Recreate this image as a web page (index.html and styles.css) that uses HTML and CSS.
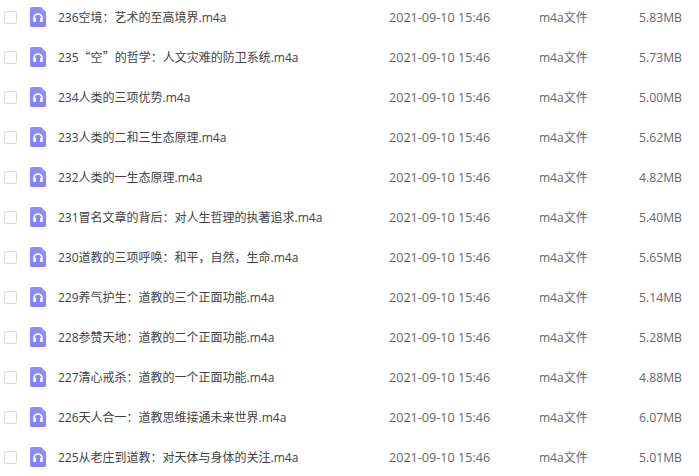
FILE: index.html
```html
<!DOCTYPE html>
<html lang="zh">

<head>
	<meta charset="UTF-8">
	<title>文件列表</title>
	<link rel="stylesheet" href="styles.css">
</head>

<body>
	<svg class="defs" width="0" height="0">
		<defs>
			<linearGradient id="fileFill" x1="0" y1="0" x2="0" y2="1">
				<stop offset="0" stop-color="#8f8ffb"/>
				<stop offset="1" stop-color="#7f81fb"/>
			</linearGradient>
			<symbol id="audioIcon" viewBox="0 0 16 20">
				<path d="M2 0H11L16 5V18a2 2 0 0 1-2 2H2a2 2 0 0 1-2-2V2a2 2 0 0 1 2-2Z" fill="url(#fileFill)"/>
				<path d="M4 12.5V11a4 4 0 0 1 8 0V12.5" fill="none" stroke="#fff" stroke-width="1.6"/>
				<rect x="3.2" y="10.8" width="2.8" height="4.2" rx="1" fill="#fff"/>
				<rect x="10" y="10.8" width="2.8" height="4.2" rx="1" fill="#fff"/>
			</symbol>
		</defs>
	</svg>
	<div class="file-list">
		<div class="file-row">
			<span class="check"></span>
			<svg class="file-icon"><use href="#audioIcon"/></svg>
			<span class="file-name">236空境：艺术的至高境界.m4a</span>
			<span class="file-date">2021-09-10 15:46</span>
			<span class="file-type">m4a文件</span>
			<span class="file-size">5.83MB</span>
		</div>
		<div class="file-row">
			<span class="check"></span>
			<svg class="file-icon"><use href="#audioIcon"/></svg>
			<span class="file-name">235<span class="quote">“</span>空<span class="quote">”</span>的哲学：人文灾难的防卫系统.m4a</span>
			<span class="file-date">2021-09-10 15:46</span>
			<span class="file-type">m4a文件</span>
			<span class="file-size">5.73MB</span>
		</div>
		<div class="file-row">
			<span class="check"></span>
			<svg class="file-icon"><use href="#audioIcon"/></svg>
			<span class="file-name">234人类的三项优势.m4a</span>
			<span class="file-date">2021-09-10 15:46</span>
			<span class="file-type">m4a文件</span>
			<span class="file-size">5.00MB</span>
		</div>
		<div class="file-row">
			<span class="check"></span>
			<svg class="file-icon"><use href="#audioIcon"/></svg>
			<span class="file-name">233人类的二和三生态原理.m4a</span>
			<span class="file-date">2021-09-10 15:46</span>
			<span class="file-type">m4a文件</span>
			<span class="file-size">5.62MB</span>
		</div>
		<div class="file-row">
			<span class="check"></span>
			<svg class="file-icon"><use href="#audioIcon"/></svg>
			<span class="file-name">232人类的一生态原理.m4a</span>
			<span class="file-date">2021-09-10 15:46</span>
			<span class="file-type">m4a文件</span>
			<span class="file-size">4.82MB</span>
		</div>
		<div class="file-row">
			<span class="check"></span>
			<svg class="file-icon"><use href="#audioIcon"/></svg>
			<span class="file-name">231冒名文章的背后：对人生哲理的执著追求.m4a</span>
			<span class="file-date">2021-09-10 15:46</span>
			<span class="file-type">m4a文件</span>
			<span class="file-size">5.40MB</span>
		</div>
		<div class="file-row">
			<span class="check"></span>
			<svg class="file-icon"><use href="#audioIcon"/></svg>
			<span class="file-name">230道教的三项呼唤：和平，自然，生命.m4a</span>
			<span class="file-date">2021-09-10 15:46</span>
			<span class="file-type">m4a文件</span>
			<span class="file-size">5.65MB</span>
		</div>
		<div class="file-row">
			<span class="check"></span>
			<svg class="file-icon"><use href="#audioIcon"/></svg>
			<span class="file-name">229养气护生：道教的三个正面功能.m4a</span>
			<span class="file-date">2021-09-10 15:46</span>
			<span class="file-type">m4a文件</span>
			<span class="file-size">5.14MB</span>
		</div>
		<div class="file-row">
			<span class="check"></span>
			<svg class="file-icon"><use href="#audioIcon"/></svg>
			<span class="file-name">228参赞天地：道教的二个正面功能.m4a</span>
			<span class="file-date">2021-09-10 15:46</span>
			<span class="file-type">m4a文件</span>
			<span class="file-size">5.28MB</span>
		</div>
		<div class="file-row">
			<span class="check"></span>
			<svg class="file-icon"><use href="#audioIcon"/></svg>
			<span class="file-name">227清心戒杀：道教的一个正面功能.m4a</span>
			<span class="file-date">2021-09-10 15:46</span>
			<span class="file-type">m4a文件</span>
			<span class="file-size">4.88MB</span>
		</div>
		<div class="file-row">
			<span class="check"></span>
			<svg class="file-icon"><use href="#audioIcon"/></svg>
			<span class="file-name">226天人合一：道教思维接通未来世界.m4a</span>
			<span class="file-date">2021-09-10 15:46</span>
			<span class="file-type">m4a文件</span>
			<span class="file-size">6.07MB</span>
		</div>
		<div class="file-row">
			<span class="check"></span>
			<svg class="file-icon"><use href="#audioIcon"/></svg>
			<span class="file-name">225从老庄到道教：对天体与身体的关注.m4a</span>
			<span class="file-date">2021-09-10 15:46</span>
			<span class="file-type">m4a文件</span>
			<span class="file-size">5.01MB</span>
		</div>
	</div>
</body>

</html>
```

FILE: styles.css
```css
html, body {
	height: 100%;
	overflow: hidden;
}

body {
	margin: 0;
	background-color: #fff;
	font-family: "Open Sans", "Noto Sans CJK SC", sans-serif;
	font-size: 12px;
	color: #424242;
}

.defs {
	display: block;
	height: 0;
}

.file-list {
	margin-top: -3px;
}

.file-row {
	display: flex;
	align-items: center;
	height: 40px;
	white-space: nowrap;
}

.check {
	box-sizing: border-box;
	flex: none;
	width: 13px;
	height: 13px;
	margin-left: 4px;
	border: 1px solid #d5d5d5;
	border-radius: 3px;
	background-color: #fff;
}

.file-icon {
	flex: none;
	width: 16px;
	height: 20px;
	margin-left: 13px;
}

.file-name {
	flex: none;
	width: 331px;
	margin-left: 12px;
}

.quote {
	font-family: "Noto Sans CJK SC", sans-serif;
}

.file-date {
	flex: none;
	width: 150px;
	color: #666;
	font-size: 12.6px;
}

.file-type {
	flex: none;
	width: 80px;
	color: #666;
}

.file-size {
	flex: none;
	width: 63px;
	color: #666;
	font-size: 12.2px;
	text-align: right;
}
```
